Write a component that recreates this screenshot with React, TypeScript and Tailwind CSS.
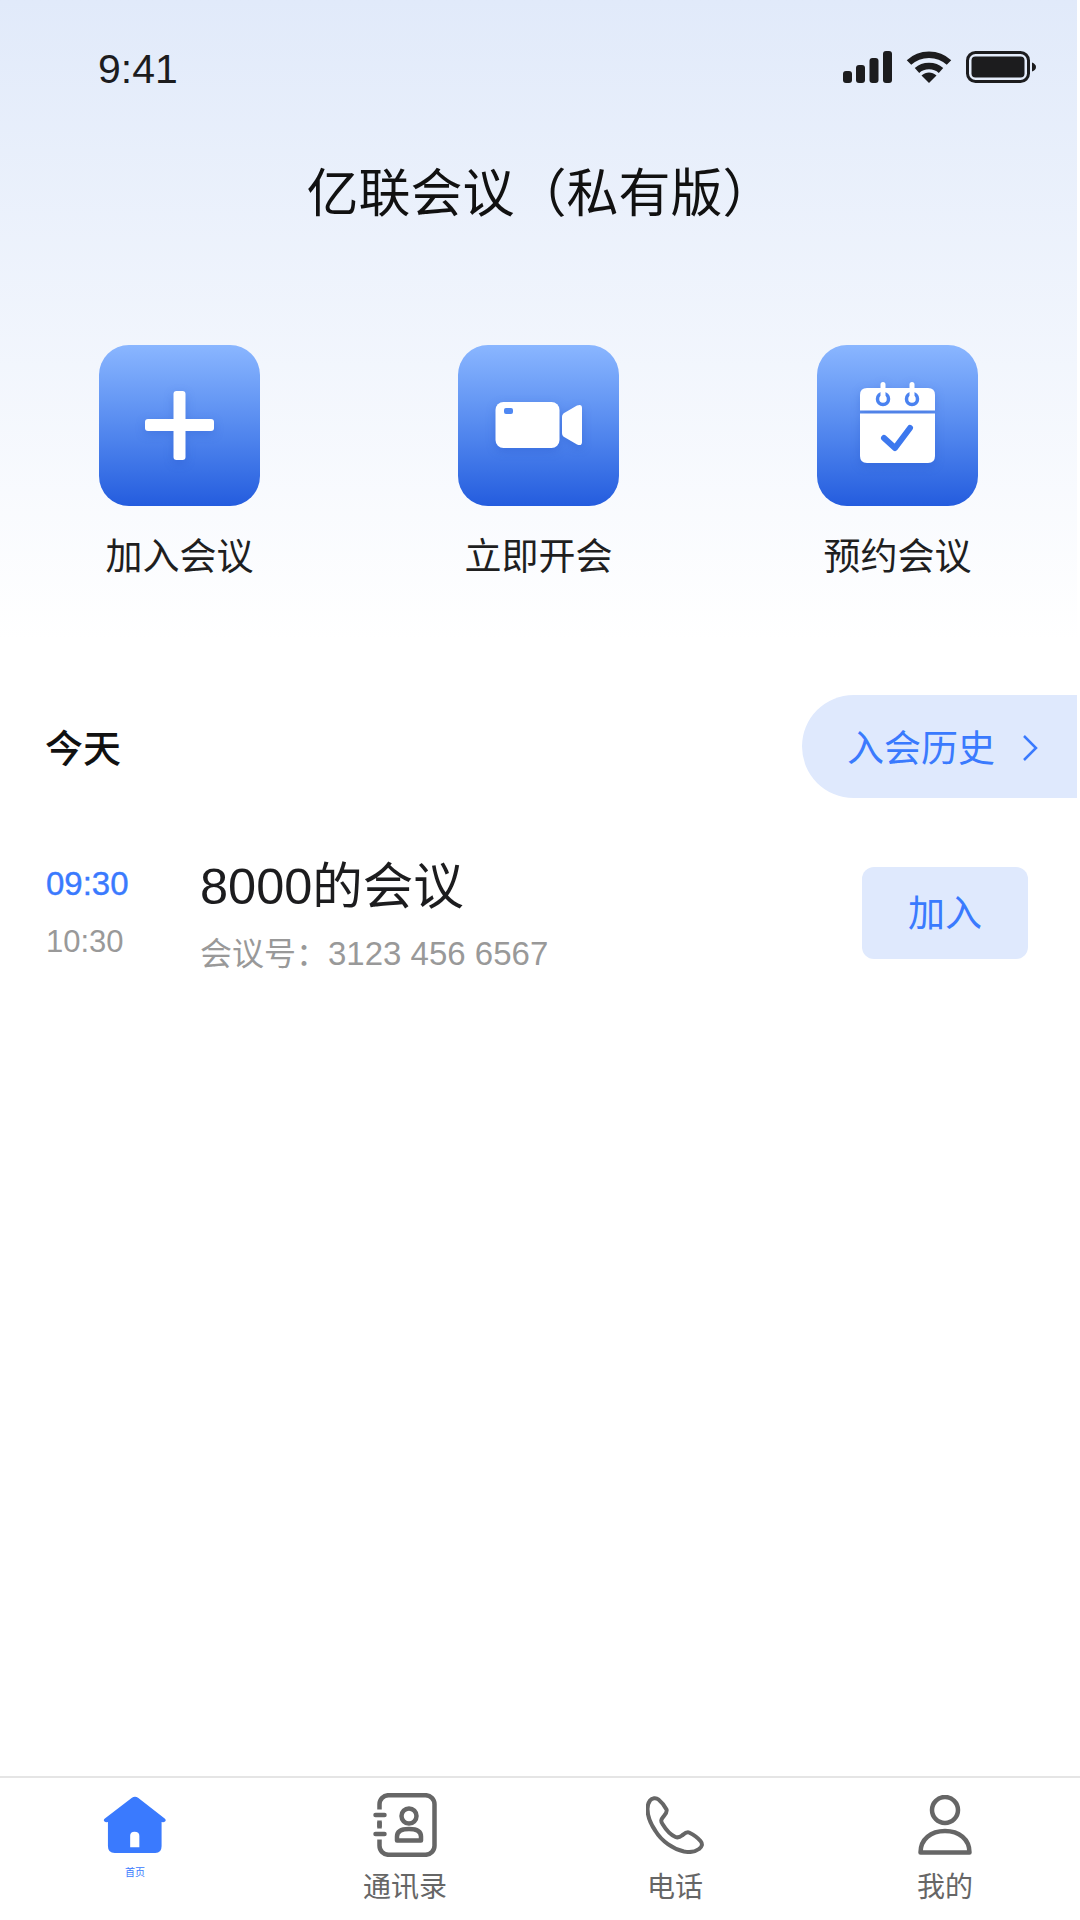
import type { ReactNode } from 'react'

const TILE_ICON = 'h-[161px] w-[161px] drop-shadow-[0_3px_5px_rgba(25,70,190,0.25)]'

function SignalIcon() {
  return (
    <svg width="49" height="32" viewBox="0 0 49 32" fill="#1c1c1e">
      <rect x="0" y="20" width="9" height="12" rx="3" />
      <rect x="13" y="14" width="9" height="18" rx="3" />
      <rect x="26.500" y="7" width="9" height="25" rx="3" />
      <rect x="40" y="0" width="9" height="32" rx="3" />
    </svg>
  )
}

function WifiIcon() {
  return (
    <svg width="46" height="32" viewBox="0 0 46 32" fill="none" stroke="#1c1c1e" strokeWidth="6.500">
      <path d="M3 11.500C14 1 32 1 43 11.500" />
      <path d="M11 19.500C17.500 13.500 28.500 13.500 35 19.500" />
      <path d="M15.500 24.500C20 20.500 26 20.500 30.500 24.500L23 32Z" fill="#1c1c1e" stroke="none" />
    </svg>
  )
}

function BatteryIcon() {
  return (
    <svg width="70" height="32" viewBox="0 0 70 32" fill="none">
      <rect x="1.500" y="1.500" width="61" height="29" rx="8" stroke="#1c1c1e" strokeWidth="3" />
      <rect x="5.500" y="5.500" width="53" height="21" rx="4" fill="#1c1c1e" />
      <path d="M66 11.500C68.500 12.500 70 14 70 16S68.500 19.500 66 20.500Z" fill="#1c1c1e" />
    </svg>
  )
}

function PlusIcon() {
  return (
    <svg className={TILE_ICON} viewBox="0 0 161 161" fill="#fff">
      <rect x="46" y="74" width="69" height="12" rx="3" />
      <rect x="74.500" y="46" width="12" height="69" rx="3" />
    </svg>
  )
}

function VideoIcon() {
  return (
    <svg className={TILE_ICON} viewBox="0 0 161 161" fill="#fff">
      <rect x="37.500" y="57" width="64" height="46" rx="8" />
      <rect x="46" y="63" width="9" height="6" rx="2" fill="#4f88f3" />
      <path d="M104 72Q104 69 107 67.500L119 60.500Q124 58.500 124 63V97Q124 101.500 119 99.500L107 92.500Q104 91 104 88Z" />
    </svg>
  )
}

function CalendarIcon() {
  return (
    <svg className={TILE_ICON} viewBox="0 0 161 161" fill="none">
      <path d="M50 43H111Q118 43 118 50V65.500H43V50Q43 43 50 43Z" fill="#fff" />
      <path d="M43 68.500H118V111Q118 118 111 118H50Q43 118 43 111Z" fill="#fff" />
      <circle cx="66" cy="54" r="5.500" stroke="#4a82f0" strokeWidth="3.500" />
      <circle cx="95" cy="54" r="5.500" stroke="#4a82f0" strokeWidth="3.500" />
      <path d="M66 39.500V53M95 39.500V53" stroke="#fff" strokeWidth="5" strokeLinecap="round" />
      <path d="M67 93L78 103L93 83" stroke="#3d78ee" strokeWidth="6" strokeLinecap="round" strokeLinejoin="round" />
    </svg>
  )
}

function HomeIcon() {
  return (
    <svg width="64" height="58" viewBox="0 0 66 60">
      <path
        d="M29.500 2Q33 -0.500 36.500 2L64 23.500Q65.500 25 64 26.500Q63 27.500 60.500 27V52Q60.500 59 54 59H12Q5 59 5 52V27Q2.500 27.500 1.500 26.500Q0 25 1.500 23.500Z"
        fill="#3a7afe"
      />
      <path d="M28 41Q28 37 32.500 37Q37.500 37 37.500 41V53H28Z" fill="#fff" />
    </svg>
  )
}

function ContactsIcon() {
  return (
    <svg width="64" height="64" viewBox="0 0 64 64" fill="none" stroke="#666" strokeWidth="4.500">
      <rect x="6.500" y="2.200" width="55" height="59.600" rx="9" />
      <path d="M2 22H11M2 41H11" stroke="#fff" strokeWidth="11" />
      <path d="M2.500 22H11.500M2.500 41H11.500" strokeLinecap="round" />
      <path d="M6.500 29V34" />
      <circle cx="36" cy="23" r="7.500" />
      <path d="M24 47.500V43.500C24 38 29 36 36 36C43 36 48 38 48 43.500V47.500Z" strokeLinejoin="round" />
    </svg>
  )
}

function PhoneIcon() {
  return (
    <svg width="58" height="58" viewBox="0 0 58 58" fill="none" stroke="#666" strokeWidth="4" strokeLinejoin="round">
      <path d="M4 4.500C6 2 10 1.500 12.500 3.500C15.500 6 19 10.500 20.500 13.500C21.500 16 19.500 18 17.500 20.500C15 23.500 14.500 25 16.500 28C19.500 33 25 39 29.500 41C32 42 33.500 41.500 36 39.500C38.500 37.500 40.500 35.500 43 36.500C47 38.500 52 42 54.500 45C57 48 56 51 53 53C49 56 43 56.500 38 55.500C27 53 15.500 45 9.500 35C4 27 1.500 19 1.500 13C1.500 9.500 2.500 6.500 4 4.500Z" />
    </svg>
  )
}

function PersonIcon() {
  return (
    <svg width="54" height="60" viewBox="0 0 54 60" fill="none" stroke="#666" strokeWidth="4.500" strokeLinejoin="round">
      <circle cx="27" cy="15" r="13" />
      <path d="M2.500 57.500C2.500 44 13 36 27 36C41 36 51.500 44 51.500 57.500Z" />
    </svg>
  )
}

const actions: { label: string; icon: ReactNode }[] = [
  { label: '加入会议', icon: <PlusIcon /> },
  { label: '立即开会', icon: <VideoIcon /> },
  { label: '预约会议', icon: <CalendarIcon /> },
]

const tabs = [
  { label: '通讯录', icon: <ContactsIcon /> },
  { label: '电话', icon: <PhoneIcon /> },
  { label: '我的', icon: <PersonIcon /> },
]

export default function App() {
  return (
    <div className="flex h-[1920px] w-[1080px] flex-col overflow-hidden bg-white [font-family:'Liberation_Sans','Noto_Sans_CJK_SC',sans-serif]">
      <header className="h-[640px] w-[1077px] bg-linear-to-b from-[#e1eafa] to-white">
        <div className="flex h-[134px] items-center justify-between pr-[41px] pl-[98px]">
          <span className="mt-[4px] text-[41px] leading-none text-[#1c1c1e]">9:41</span>
          <div className="flex items-center gap-[14px]">
            <SignalIcon />
            <WifiIcon />
            <BatteryIcon />
          </div>
        </div>
        <h1 className="mt-[6px] h-[108px] pl-[4px] text-center text-[52px] leading-[108px] font-normal text-[#111]">亿联会议（私有版）</h1>
        <div className="mt-[97px] grid grid-cols-3">
          {actions.map((action) => (
            <div key={action.label} className="flex flex-col items-center">
              <div className="h-[161px] w-[161px] rounded-[30px] bg-linear-to-b from-[#8ab6ff] to-[#245cde]">
                {action.icon}
              </div>
              <span className="mt-[27px] text-[37px] leading-[50px] text-[#1f1f1f]">{action.label}</span>
            </div>
          ))}
        </div>
      </header>

      <section className="mt-[55px] flex h-[103px] w-[1077px] items-center justify-between pl-[45px]">
        <span className="mt-[6px] text-[38px] font-medium text-[#111]">今天</span>
        <button className="flex h-full w-[275px] items-center rounded-l-[52px] bg-[#dfe9fd] pl-[45px] text-[37px] text-[#3a7afe]">
          <span className="mt-[6px]">入会历史</span>
          <svg className="mt-[2px] ml-[26px]" width="18" height="30" viewBox="0 0 18 30" fill="none" stroke="#3a7afe" strokeWidth="2.500">
            <path d="M3 3L15 15L3 27" />
          </svg>
        </button>
      </section>

      <section className="mt-[60px] flex items-start pr-[52px] pl-[46px]">
        <div className="flex w-[154px] flex-col gap-[14px] pt-[4px]">
          <span className="text-[33px] leading-[44px] text-[#3a7afe] [-webkit-text-stroke:0.4px_#3a7afe]">09:30</span>
          <span className="text-[31px] leading-[44px] text-[#999]">10:30</span>
        </div>
        <div className="flex flex-1 flex-col gap-[18px]">
          <span className="mt-[2px] text-[50.5px] leading-[54px] text-[#1c1c1e]">8000的会议</span>
          <span className="text-[33px] leading-[44px] text-[#999]">
            <span className="text-[32px]">会议号：</span>3123 456 6567
          </span>
        </div>
        <button className="mt-[9px] h-[92px] w-[166px] rounded-[12px] bg-[#dfe9fd] pt-[3px] text-[37px] text-[#3a7afe]">加入</button>
      </section>

      <nav className="mt-auto grid h-[144px] grid-cols-4 border-t-2 border-[#e5e5e5] pt-[15px]">
        <div className="flex flex-col items-center">
          <div className="flex h-[64px] items-center justify-center">
            <HomeIcon />
          </div>
          <span className="mt-[9px] text-[10px] leading-[14px] text-[#3a7afe]">首页</span>
        </div>
        {tabs.map((tab) => (
          <div key={tab.label} className="flex flex-col items-center">
            <div className="flex h-[64px] items-center justify-center">{tab.icon}</div>
            <span className="mt-[11px] text-[28px] leading-[40px] text-[#666]">{tab.label}</span>
          </div>
        ))}
      </nav>
    </div>
  )
}
